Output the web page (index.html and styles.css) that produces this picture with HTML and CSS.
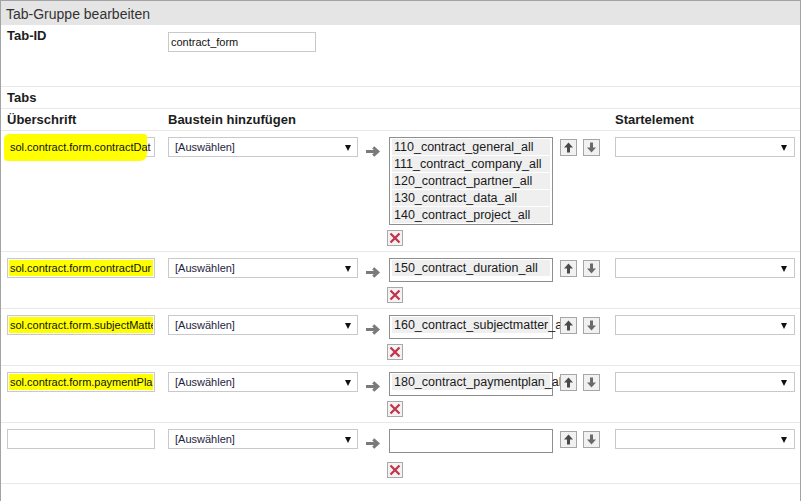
FILE: index.html
```html
<!DOCTYPE html>
<html lang="de">
<head>
<meta charset="utf-8">
<title>Tab-Gruppe bearbeiten</title>
<link rel="stylesheet" href="styles.css">
</head>
<body>
<div class="panel">
  <div class="panel-title">Tab-Gruppe bearbeiten</div>

  <div class="grid id-row">
    <div class="label">Tab-ID</div>
    <div class="textbox id-box"><span class="val">contract_form</span></div>
  </div>

  <div class="section-title">Tabs</div>

  <div class="grid tabs-head">
    <div class="label">Überschrift</div>
    <div class="label span-4">Baustein hinzufügen</div>
    <div class="label">Startelement</div>
  </div>

  <!-- Row 1 -->
  <div class="grid tab-row">
    <div class="textbox"><span class="marker"></span><span class="val">sol.contract.form.contractDat</span></div>
    <div class="dropdown"><span>[Auswählen]</span><span class="caret"></span></div>
    <svg class="add-arrow" width="15" height="11" viewBox="0 0 15 11"><path d="M0 5.5H11.5" /><path d="M7.2 1.3L11.8 5.5L7.2 9.7" /></svg>
    <div class="module-cell">
      <div class="listbox">
        <div class="item">110_contract_general_all</div>
        <div class="item">111_contract_company_all</div>
        <div class="item">120_contract_partner_all</div>
        <div class="item">130_contract_data_all</div>
        <div class="item">140_contract_project_all</div>
      </div>
      <button class="remove"><svg width="14" height="14" viewBox="0 0 14 14"><path d="M2.5 2.5L11.5 11.5M11.5 2.5L2.5 11.5"/></svg></button>
    </div>
    <div class="move">
      <button class="mv up"><svg width="15" height="15" viewBox="0 0 15 15"><path d="M7.5 2.5L12 7.5H9V12.5H6V7.5H3Z"/></svg></button>
      <button class="mv down"><svg width="15" height="15" viewBox="0 0 15 15"><path d="M7.5 12.5L12 7.5H9V2.5H6V7.5H3Z"/></svg></button>
    </div>
    <div class="dropdown start"><span></span><span class="caret"></span></div>
  </div>

  <!-- Row 2 -->
  <div class="grid tab-row">
    <div class="textbox"><span class="val hl">sol.contract.form.contractDur</span></div>
    <div class="dropdown"><span>[Auswählen]</span><span class="caret"></span></div>
    <svg class="add-arrow" width="15" height="11" viewBox="0 0 15 11"><path d="M0 5.5H11.5" /><path d="M7.2 1.3L11.8 5.5L7.2 9.7" /></svg>
    <div class="module-cell">
      <div class="listbox">
        <div class="item">150_contract_duration_all</div>
      </div>
      <button class="remove"><svg width="14" height="14" viewBox="0 0 14 14"><path d="M2.5 2.5L11.5 11.5M11.5 2.5L2.5 11.5"/></svg></button>
    </div>
    <div class="move">
      <button class="mv up"><svg width="15" height="15" viewBox="0 0 15 15"><path d="M7.5 2.5L12 7.5H9V12.5H6V7.5H3Z"/></svg></button>
      <button class="mv down"><svg width="15" height="15" viewBox="0 0 15 15"><path d="M7.5 12.5L12 7.5H9V2.5H6V7.5H3Z"/></svg></button>
    </div>
    <div class="dropdown start"><span></span><span class="caret"></span></div>
  </div>

  <!-- Row 3 -->
  <div class="grid tab-row">
    <div class="textbox"><span class="val hl">sol.contract.form.subjectMatte</span></div>
    <div class="dropdown"><span>[Auswählen]</span><span class="caret"></span></div>
    <svg class="add-arrow" width="15" height="11" viewBox="0 0 15 11"><path d="M0 5.5H11.5" /><path d="M7.2 1.3L11.8 5.5L7.2 9.7" /></svg>
    <div class="module-cell">
      <div class="listbox">
        <div class="item">160_contract_subjectmatter_all</div>
      </div>
      <button class="remove"><svg width="14" height="14" viewBox="0 0 14 14"><path d="M2.5 2.5L11.5 11.5M11.5 2.5L2.5 11.5"/></svg></button>
    </div>
    <div class="move">
      <button class="mv up"><svg width="15" height="15" viewBox="0 0 15 15"><path d="M7.5 2.5L12 7.5H9V12.5H6V7.5H3Z"/></svg></button>
      <button class="mv down"><svg width="15" height="15" viewBox="0 0 15 15"><path d="M7.5 12.5L12 7.5H9V2.5H6V7.5H3Z"/></svg></button>
    </div>
    <div class="dropdown start"><span></span><span class="caret"></span></div>
  </div>

  <!-- Row 4 -->
  <div class="grid tab-row">
    <div class="textbox"><span class="val hl">sol.contract.form.paymentPla</span></div>
    <div class="dropdown"><span>[Auswählen]</span><span class="caret"></span></div>
    <svg class="add-arrow" width="15" height="11" viewBox="0 0 15 11"><path d="M0 5.5H11.5" /><path d="M7.2 1.3L11.8 5.5L7.2 9.7" /></svg>
    <div class="module-cell">
      <div class="listbox">
        <div class="item">180_contract_paymentplan_all</div>
      </div>
      <button class="remove"><svg width="14" height="14" viewBox="0 0 14 14"><path d="M2.5 2.5L11.5 11.5M11.5 2.5L2.5 11.5"/></svg></button>
    </div>
    <div class="move">
      <button class="mv up"><svg width="15" height="15" viewBox="0 0 15 15"><path d="M7.5 2.5L12 7.5H9V12.5H6V7.5H3Z"/></svg></button>
      <button class="mv down"><svg width="15" height="15" viewBox="0 0 15 15"><path d="M7.5 12.5L12 7.5H9V2.5H6V7.5H3Z"/></svg></button>
    </div>
    <div class="dropdown start"><span></span><span class="caret"></span></div>
  </div>

  <!-- Row 5 (new) -->
  <div class="grid tab-row new">
    <div class="textbox"><span class="val"></span></div>
    <div class="dropdown"><span>[Auswählen]</span><span class="caret"></span></div>
    <svg class="add-arrow" width="15" height="11" viewBox="0 0 15 11"><path d="M0 5.5H11.5" /><path d="M7.2 1.3L11.8 5.5L7.2 9.7" /></svg>
    <div class="module-cell">
      <div class="listbox"></div>
      <button class="remove"><svg width="14" height="14" viewBox="0 0 14 14"><path d="M2.5 2.5L11.5 11.5M11.5 2.5L2.5 11.5"/></svg></button>
    </div>
    <div class="move">
      <button class="mv up"><svg width="15" height="15" viewBox="0 0 15 15"><path d="M7.5 2.5L12 7.5H9V12.5H6V7.5H3Z"/></svg></button>
      <button class="mv down"><svg width="15" height="15" viewBox="0 0 15 15"><path d="M7.5 12.5L12 7.5H9V2.5H6V7.5H3Z"/></svg></button>
    </div>
    <div class="dropdown start"><span></span><span class="caret"></span></div>
  </div>
</div>
</body>
</html>
```

FILE: styles.css
```css
* { box-sizing: border-box; }

html, body {
  margin: 0;
  padding: 0;
  background: #fff;
}

body {
  font-family: "Liberation Sans", Arial, sans-serif;
  color: #222;
}

.panel {
  width: 801px;
  min-height: 100vh;
  border: 1px solid #a3a3a3;
  border-bottom: 0;
}

.panel-title {
  height: 24px;
  padding: 3px 5px 0;
  background: #e5e5e5;
  font-size: 14px;
  line-height: 20px;
  color: #333;
}

.grid {
  display: grid;
  grid-template-columns: 161px 198px 23px 171px 55px 180px;
  align-items: start;
  padding-left: 6px;
  border-bottom: 1px solid #e8e8e8;
}

.label {
  font-size: 13px;
  font-weight: bold;
  line-height: 15px;
  color: #1c1c1c;
}

.span-4 { grid-column: span 4; }

.id-row { height: 62px; }
.id-row .label { margin-top: 3px; }
.id-box { margin-top: 7px; }

.section-title {
  padding: 3px 6px;
  font-size: 13px;
  font-weight: bold;
  line-height: 15px;
  color: #1c1c1c;
  border-bottom: 1px solid #e8e8e8;
}

.tabs-head {
  padding-top: 3px;
  padding-bottom: 3px;
}

.tab-row {
  padding-top: 6px;
  padding-bottom: 5px;
}

/* text input look */
.textbox {
  position: relative;
  display: block;
  width: 148px;
  height: 20px;
  border: 1px solid #c9c9c9;
  background: #fff;
}

.textbox .val {
  position: relative;
  z-index: 1;
  display: block;
  height: 18px;
  padding: 0 2px;
  overflow: hidden;
  white-space: nowrap;
  font-size: 11px;
  line-height: 19px;
  color: #111;
}

.textbox .val.hl {
  height: 16px;
  margin: 1px;
  padding-left: 1px;
  line-height: 17px;
  background: #ffff00;
}

.marker {
  position: absolute;
  left: -4px;
  top: -4px;
  width: 143px;
  height: 27px;
  background: #ffff00;
  border-radius: 5px 3px 7px 4px;
}

/* select look */
.dropdown {
  display: flex;
  align-items: center;
  justify-content: space-between;
  width: 190px;
  height: 20px;
  padding: 0 6px 0 6px;
  border: 1px solid #c9c9c9;
  background: #fff;
  font-size: 11px;
  color: #1d2540;
}

.dropdown.start { width: 180px; padding-right: 7px; }

.caret {
  width: 0;
  height: 0;
  margin-top: 1px;
  border-left: 3px solid transparent;
  border-right: 3px solid transparent;
  border-top: 6px solid #111;
}

.add-arrow {
  display: block;
  margin-top: 9px;
  fill: none;
  stroke: #7a7a7a;
  stroke-width: 3;
}

.module-cell {
  display: flex;
  flex-direction: column;
  align-items: flex-start;
}

.listbox {
  width: 164px;
  min-height: 24px;
  padding: 1px 2px;
  border: 1px solid #8e8e8e;
  background: #fff;
}

.item {
  height: 16px;
  padding-left: 2px;
  background: #efefef;
  font-size: 12.5px;
  line-height: 16px;
  white-space: nowrap;
  color: #1a1a1a;
}

.item + .item { margin-top: 1px; }

.remove {
  display: block;
  width: 16px;
  height: 16px;
  margin: 5px 0 0 -2px;
  padding: 0;
  border: 1px solid #a9a9a9;
  background: #f3f3f3;
}

.remove svg {
  display: block;
  stroke: #c2364c;
  stroke-width: 2.3;
}

.tab-row.new .remove { margin-top: 9px; }

.move {
  display: flex;
  gap: 6px;
  margin-top: 2px;
}

.mv {
  display: block;
  width: 17px;
  height: 17px;
  padding: 0;
  border: 1px solid #a6a6a6;
  background: #f1f1f1;
}

.mv svg { display: block; }
.mv.up svg { fill: #4a4a4a; }
.mv.down svg { fill: #6a6a6a; }
```
